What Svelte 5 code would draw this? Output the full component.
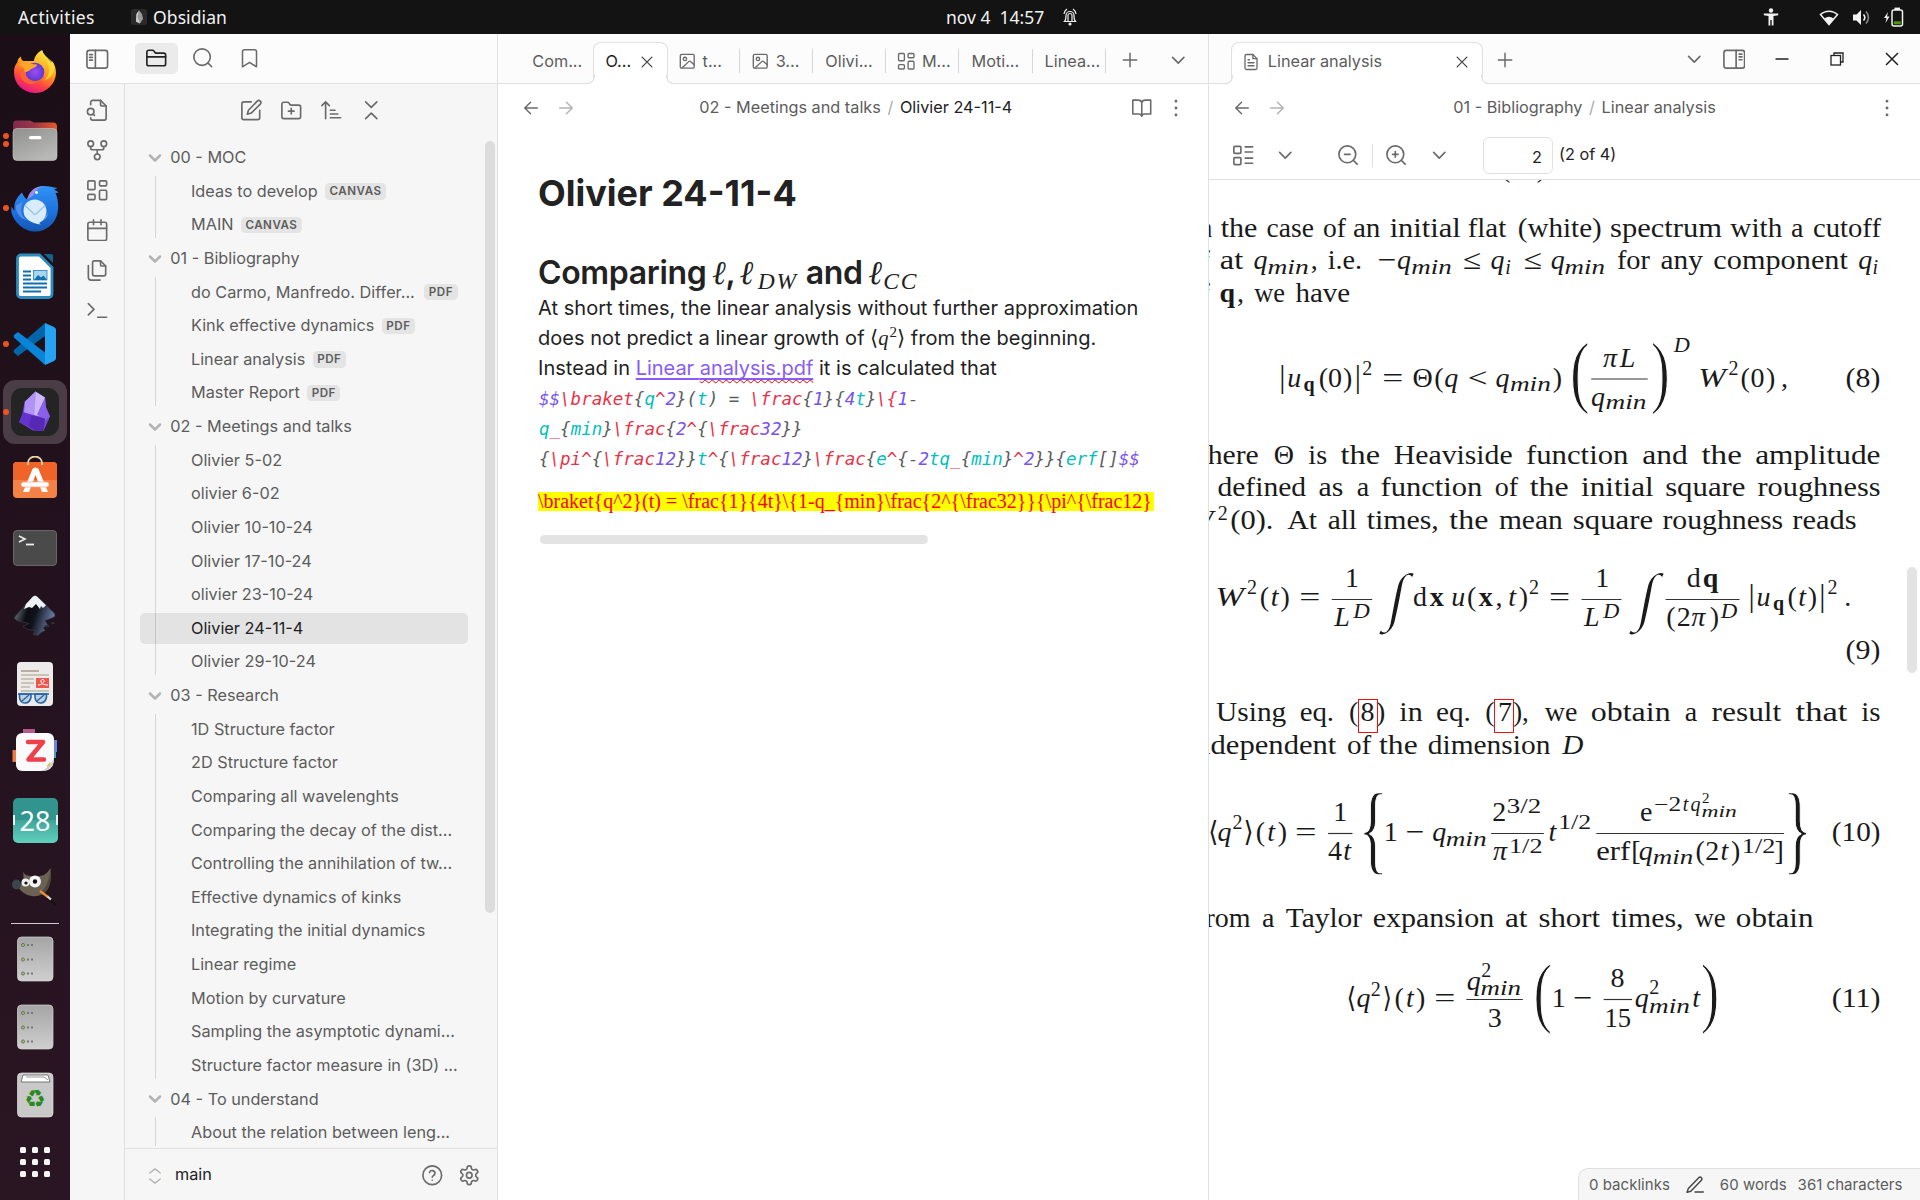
<script>
  // 24px-grid stroke icons
  const icons = {
    panelLeft: '<rect x="1" y="2.5" width="22" height="19" rx="2.5"/><path d="M10 2.5v19M3.8 7h3M3.8 10h3M3.8 13h3"/>',
    panelRight: '<rect x="1" y="2.5" width="22" height="19" rx="2.5"/><path d="M14 2.5v19M17.2 6.5h3M17.2 9.5h3M17.2 12.5h3"/>',
    folder: '<path d="M20 20a2 2 0 0 0 2-2V8.5a2 2 0 0 0-2-2h-7.9a2 2 0 0 1-1.69-.9L9.6 4.4A2 2 0 0 0 7.93 3.5H4a2 2 0 0 0-2 2V18a2 2 0 0 0 2 2Z"/><path d="M2 10.5h20"/>',
    search: '<circle cx="11" cy="11" r="9"/><path d="m21.5 21.5-4.2-4.2"/>',
    bookmark: '<path d="m20 21.5-8-5-8 5V4a2 2 0 0 1 2-2h12a2 2 0 0 1 2 2z"/>',
    fileSearch: '<path d="M15.5 1.500H7a2 2 0 0 0-2 2v2.500M5 20v.5a2 2 0 0 0 2 2h12.500a2 2 0 0 0 2-2V7.500L15.500 1.500"/><path d="M15.500 1.500v4a2 2 0 0 0 2 2h4"/><circle cx="5" cy="13.500" r="3.500"/><path d="m9 17.500-1.500-1.500"/>',
    fork: '<circle cx="12" cy="19" r="3"/><circle cx="5" cy="5" r="3"/><circle cx="19" cy="5" r="3"/><path d="M19 8v1.5a2 2 0 0 1-2 2H7a2 2 0 0 1-2-2V8M12 11.5V16"/>',
    dashboard: '<rect width="7.6" height="9.4" x="2" y="2" rx="1.2"/><rect width="7.6" height="5.4" x="14.4" y="2" rx="1.2"/><rect width="7.6" height="10" x="14.4" y="12" rx="1.2"/><rect width="7.6" height="5.6" x="2" y="16.4" rx="1.2"/>',
    calendar: '<path d="M8 1v5M16 1v5"/><rect width="20" height="19.5" x="2" y="3.5" rx="2"/><path d="M2 10h20"/>',
    files: '<path d="M15.500 2H9a2 2 0 0 0-2 2v12a2 2 0 0 0 2 2h10a2 2 0 0 0 2-2V7.500Z"/><path d="M15.500 2v4a1.500 1.500 0 0 0 1.500 1.500h4"/><path d="M2.500 7v12.500a3 3 0 0 0 3 3H15"/>',
    terminal: '<path d="m2.500 17 6-6-6-6M12.500 19.500h9.500"/>',
    edit: '<path d="M12 3H4a2 2 0 0 0-2 2v15a2 2 0 0 0 2 2h15a2 2 0 0 0 2-2v-8"/><path d="M18.4 2.2a2.1 2.1 0 0 1 3.200 3.200L12 15l-4.200 1.200L9 12Z"/>',
    folderPlus: '<path d="M12 10v6M9 13h6"/><path d="M20 21a2 2 0 0 0 2-2V8.500a2 2 0 0 0-2-2h-7.900a2 2 0 0 1-1.690-.9L9.600 4.400A2 2 0 0 0 7.930 3.500H4a2 2 0 0 0-2 2V19a2 2 0 0 0 2 2Z"/>',
    sort: '<path d="m2 7 4-4 4 4M6 3v18M11 12h5M11 16h8M11 20h11"/>',
    collapse: '<path d="m6 21 6-6 6 6M6 3l6 6 6-6"/>',
    chevron: '<path d="m6 9 6 6 6-6"/>',
    updown: '<path d="m5 16 7 5.500 7-5.500M5 8l7-5.500 7 5.500"/>',
    help: '<circle cx="12" cy="12" r="10"/><path d="M9.100 9a3 3 0 0 1 5.830 1c0 2-3 2.500-3 4M12 17.300h.01"/>',
    gear: '<path d="M12.220 2h-.44a2 2 0 0 0-2 2v.18a2 2 0 0 1-1 1.730l-.43.25a2 2 0 0 1-2 0l-.15-.08a2 2 0 0 0-2.730.73l-.22.38a2 2 0 0 0 .73 2.730l.15.1a2 2 0 0 1 1 1.720v.51a2 2 0 0 1-1 1.740l-.15.09a2 2 0 0 0-.73 2.730l.22.38a2 2 0 0 0 2.730.73l.15-.08a2 2 0 0 1 2 0l.43.25a2 2 0 0 1 1 1.730V20a2 2 0 0 0 2 2h.44a2 2 0 0 0 2-2v-.18a2 2 0 0 1 1-1.730l.43-.25a2 2 0 0 1 2 0l.15.08a2 2 0 0 0 2.730-.73l.22-.39a2 2 0 0 0-.73-2.730l-.15-.08a2 2 0 0 1-1-1.740v-.5a2 2 0 0 1 1-1.740l.15-.09a2 2 0 0 0 .73-2.730l-.22-.38a2 2 0 0 0-2.730-.73l-.15.08a2 2 0 0 1-2 0l-.43-.25a2 2 0 0 1-1-1.730V4a2 2 0 0 0-2-2z"/><circle cx="12" cy="12" r="3"/>',
    image: '<rect width="18" height="18" x="3" y="3" rx="2"/><circle cx="9" cy="9" r="2.200"/><path d="m5.500 20.500 8.300-8a2 2 0 0 1 2.800 0L21 16.500"/>',
    doc: '<path d="M14.500 2H6a2 2 0 0 0-2 2v16a2 2 0 0 0 2 2h12a2 2 0 0 0 2-2V7.500Z"/><path d="M14.500 2v5.500H20M16 13H8M16 17H8M10 9H8"/>',
    x: '<path d="M18.500 5.500l-13 13M5.500 5.500l13 13"/>',
    plus: '<path d="M4 12h16M12 4v16"/>',
    back: '<path d="m11.500 19-7-7 7-7M19.500 12h-15"/>',
    forward: '<path d="m12.500 19 7-7-7-7M4.500 12h15"/>',
    book: '<path d="M2 3.500h6a4 4 0 0 1 4 3v15a3 3 0 0 0-3-2.500H2zM22 3.500h-6a4 4 0 0 0-4 3v15a3 3 0 0 1 3-2.500h7z"/>',
    dots: '<circle cx="12" cy="12" r=".7"/><circle cx="12" cy="4.500" r=".7"/><circle cx="12" cy="19.500" r=".7"/>',
    thumbs: '<rect width="7.500" height="7.500" x="2" y="2.500" rx="1"/><rect width="7.500" height="7.500" x="2" y="14.500" rx="1"/><path d="M14 3h8M14 8.500h8M14 15h8M14 20.500h8"/>',
    zoomOut: '<circle cx="11" cy="11" r="9"/><path d="m21.500 21.500-4.200-4.200M8 11h6"/>',
    zoomIn: '<circle cx="11" cy="11" r="9"/><path d="m21.500 21.500-4.200-4.200M8 11h6M11 8v6"/>',
    pencil: '<path d="M12 20.500h10"/><path d="M16.500 3.200a2.200 2.200 0 0 1 3.200 3.200L7 19.500l-4.500 1.300L4 16.200Z"/>'
  };

  const tree = [
    { name: '00 - MOC', items: [['Ideas to develop', 'CANVAS'], ['MAIN', 'CANVAS']] },
    { name: '01 - Bibliography', items: [['do Carmo, Manfredo. Differ...', 'PDF'], ['Kink effective dynamics', 'PDF'], ['Linear analysis', 'PDF'], ['Master Report', 'PDF']] },
    { name: '02 - Meetings and talks', items: [['Olivier 5-02'], ['olivier 6-02'], ['Olivier 10-10-24'], ['Olivier 17-10-24'], ['olivier 23-10-24'], ['Olivier 24-11-4'], ['Olivier 29-10-24']] },
    { name: '03 - Research', items: [['1D Structure factor'], ['2D Structure factor'], ['Comparing all wavelenghts'], ['Comparing the decay of the dist...'], ['Controlling the annihilation of tw...'], ['Effective dynamics of kinks'], ['Integrating the initial dynamics'], ['Linear regime'], ['Motion by curvature'], ['Sampling the asymptotic dynami...'], ['Structure factor measure in (3D) ...']] },
    { name: '04 - To understand', items: [['About the relation between leng...']] }
  ];
  const current = 'Olivier 24-11-4';

  const tabs = [['Com...'], ['O...', null, true], ['t...', 'image'], ['3...', 'image'], ['Olivi...'], ['M...', 'dashboard'], ['Moti...'], ['Linea...']];

  // LaTeX source, one [class, text] token list per visual line
  const code = [
    [['n', '$$'], ['k', '\\braket'], ['b', '{'], ['v', 'q'], ['k', '^'], ['n', '2'], ['b', '}('], ['v', 't'], ['b', ') = '], ['k', '\\frac'], ['b', '{'], ['n', '1'], ['b', '}{'], ['n', '4'], ['v', 't'], ['b', '}'], ['k', '\\{'], ['n', '1'], ['b', '-']],
    [['v', 'q'], ['k', '_'], ['b', '{'], ['v', 'min'], ['b', '}'], ['k', '\\frac'], ['b', '{'], ['n', '2'], ['k', '^'], ['b', '{'], ['k', '\\frac'], ['n', '32'], ['b', '}}']],
    [['b', '{'], ['k', '\\pi^'], ['b', '{'], ['k', '\\frac'], ['n', '12'], ['b', '}}'], ['v', 't'], ['k', '^'], ['b', '{'], ['k', '\\frac'], ['n', '12'], ['b', '}'], ['k', '\\frac'], ['b', '{'], ['v', 'e'], ['k', '^'], ['b', '{-'], ['n', '2'], ['v', 'tq'], ['k', '_'], ['b', '{'], ['v', 'min'], ['b', '}'], ['k', '^'], ['n', '2'], ['b', '}}{'], ['v', 'erf'], ['b', '[]'], ['n', '$$']]
  ];
  const errorText = '\\braket{q^2}(t) = \\frac{1}{4t}\\{1-q_{min}\\frac{2^{\\frac32}}{\\pi^{\\frac12}';

  // PDF text layer: [baseline, size, style, "word|start|end ..."] with columns in page units
  const unit = 0.45918;
  const px = (u) => 1200 + u * unit;
  const runs = [
    [176.500, 28, '', '(|656|675 )|734|753'],
    [236.700, 28, '', 'In|-12|26 the|45|125 case|145|248 of|268|318 an|333|393 initial|413|568 flat|583|667 (white)|692|875 spectrum|893|1137 with|1155|1268 a|1288|1313 cutoff|1335|1483'],
    [269, 28, '', 'of|-28|21 at|43|94 ,|243|255 i.e.|278|353 −|387|428 ≤|573|613 ≤|705|745 for|908|980 any|1003|1095 component|1118|1411'],
    [269, 28, 'i', 'q|118|145 q|431|458 q|636|660 q|766|792 q|1436|1462'],
    [273.500, 20, 'i', 'min|147|237 min|460|548 i|664|678 min|794|882 i|1464|1477'],
    [301.700, 28, '', 'of|-28|21 ,|82|94 we|118|185 have|208|327'],
    [301.700, 28, 'b', 'q|43|76'],
    // (8)
    [387.300, 28, '', '||173|186 (|260|278 0|280|308 )|312|331 ||338|350 =|397|443 Θ|463|507 (|511|530 <|583|626 )|769|788 (|1178|1197 0|1200|1228 )|1234|1252 ,|1266|1280 (8)|1406|1482'],
    [387.300, 28, 'i', 'u|189|222 q|533|561 q|645|673 W|1085|1145'],
    [391, 20, 'b', 'q|225|250'],
    [375, 20, '', '2|353|376 2|1151|1173'],
    [391, 20, 'i', 'min|675|764'],
    [367.300, 28, 'i', 'π|876|910 L|912|950'],
    [405.500, 28, 'i', 'q|853|881'],
    [409.300, 20, 'i', 'min|883|972'],
    [352.300, 20, 'i', 'D|1032|1067'],
    [464, 28, '', 'where|-30|128 Θ|160|205 is|236|277 the|306|392 Heaviside|422|681 function|710|933 and|963|1062 the|1092|1180 amplitude|1209|1482'],
    [496, 28, '', 'defined|38|231 as|258|312 a|340|370 function|393|615 of|642|693 the|718|803 initial|830|988 square|1013|1188 roughness|1214|1482'],
    [528.700, 28, '', '(0).|66|160 At|190|255 all|278|342 times,|363|520 the|543|628 mean|651|790 square|812|987 roughness|1007|1270 reads|1290|1430'],
    [528.700, 28, 'i', 'W|-29|29'],
    [519.500, 20, '', '2|38|61'],
    // (9)
    [605.700, 28, '', '(|131|150 )|176|195 =|216|262 d|463|495 (|582|601 ,|645|657 )|695|714 =|760|806 ||1195|1208 (|1280|1299 )|1324|1343 ||1349|1362 .|1404|1417'],
    [605.700, 28, 'i', 'W|34|96 t|152|173 u|547|578 t|670|690 u|1211|1243 t|1301|1322'],
    [605.700, 28, 'b', 'x|498|533 x|604|641'],
    [594, 20, '', '2|102|125 2|716|739 2|1366|1389'],
    [587.300, 28, '', '1|317|345 1|862|890 d|1059|1092'],
    [587.300, 28, 'b', 'q|1094|1130'],
    [626, 28, 'i', 'L|291|328 L|835|872'],
    [617.700, 20, 'i', 'D|334|370 D|878|913 D|1134|1170'],
    [626, 28, '', '(|1016|1035 2|1040|1067 )|1111|1130'],
    [626, 28, 'i', 'π|1068|1102'],
    [609.500, 20, 'b', 'q|1247|1273'],
    [658.500, 28, '', '(9)|1406|1482'],
    [721.300, 28, '', 'Using|35|188 eq.|217|292 (|325|344 8|350|380 )|384|403 in|434|485 eq.|514|590 (|622|641 7|650|678 ),|682|716 we|751|822 obtain|851|1025 a|1054|1085 result|1114|1266 that|1297|1410 is|1440|1482'],
    [754, 28, '', 'independent|-29|297 of|320|373 the|390|474 dimension|496|763'],
    [754, 28, 'i', 'D|789|835'],
    // (10)
    [840.800, 28, '', '⟨|18|40 ⟩|95|117 (|122|141 )|170|189 =|207|254 1|402|429 −|448|489 (10)|1376|1482'],
    [840.800, 28, 'i', 'q|39|68 t|144|166 q|507|535 t|757|778'],
    [828.800, 20, '', '2|70|93 1/2|780|852'],
    [820.800, 28, '', '1|292|319 2|638|665 e|958|986'],
    [860, 28, '', '4|280|308 erf|863|937 [|942|957 (|1080|1099 2|1102|1129 )|1157|1176 ]|1254|1269'],
    [860, 28, 'i', 't|310|331 π|636|671 q|957|985 t|1131|1153'],
    [845.500, 20, 'i', 'min|535|624'],
    [812.600, 20, '', '3/2|668|743'],
    [852.900, 20, '', '1/2|673|746 1/2|1180|1253'],
    [810.900, 20, '', '−2|989|1048'],
    [810.900, 20, 'i', 't|1050|1065 q|1068|1090'],
    [802.900, 15, '', '2|1092|1111'],
    [817, 16, 'i', 'min|1092|1169'],
    [864, 20, 'i', 'min|986|1074'],
    [927.300, 28, '', 'From|-22|110 a|134|163 Taylor|187|353 expansion|376|641 at|664|713 short|737|871 times,|896|1053 we|1077|1145 obtain|1167|1336'],
    // (11)
    [1007.200, 28, '', '⟨|319|340 ⟩|398|418 (|424|443 )|471|490 =|510|556 1|768|795 −|813|855 (11)|1376|1482'],
    [1007.200, 28, 'i', 'q|342|370 t|446|468 q|948|976 t|1070|1091'],
    [996, 20, '', '2|371|394'],
    [989.600, 28, 'i', 'q|582|610'],
    [976.900, 20, '', '2|612|635'],
    [994.800, 20, 'i', 'min|611|699'],
    [1026.800, 28, '', '3|628|656 15|881|939'],
    [987.200, 28, '', '8|896|923'],
    [994, 20, '', '2|978|1000'],
    [1013, 20, 'i', 'min|978|1067']
  ];
  const words = runs.flatMap(([y, size, style, line]) =>
    line.split(' ').map((w) => {
      const p = w.split('|');
      const b = +p.pop();
      const a = +p.pop();
      const t = p.join('|') || '|';
      // relations and wide capitals keep their drawn width, other single symbols their natural shape
      const single = t.length === 1 && !'=−<≤⟨⟩WD'.includes(t);
      return { y, size: t === '|' ? 31 : size, style, t, single, x: px(single ? (a + b) / 2 : a), w: (b - a) * unit };
    })
  );
  // fraction bars
  const bars = [[852, 975, 379], [287, 375, 599.500], [831, 918, 599.500], [1014, 1175, 599.500], [279, 332, 833.500], [634, 749, 833.500], [863, 1272, 833.500], [580, 703, 999.500], [879, 941, 999.500]];
  // tall delimiters: glyph, left, right, top, bottom
  const tall = [['(', 812, 845, 344, 412], [')', 985, 1017, 344, 412], ['{', 358, 392, 794, 879.500], ['}', 1287, 1320, 794, 879.500], ['(', 732, 763, 965, 1032.500], [')', 1094, 1125, 965, 1032.500]].map(([t, a, b, top, bot]) => {
    const size = (bot - top) / 0.853;
    const brace = t === '{' || t === '}';
    const ink = brace ? (t === '{' ? [0.100, 0.350] : [0.130, 0.380]) : t === '(' ? [0.048, 0.304] : [0.029, 0.285];
    const sx = ((b - a) * unit) / ((ink[1] - ink[0]) * size);
    return { t, size, tf: `translate(${px(a) - ink[0] * size * sx} ${bot - 0.177 * size}) scale(${sx} 1)` };
  });
</script>

{#snippet icon(name, size = 22.5, cls = '')}
  <svg class="ic {cls}" width={size} height={size} viewBox="0 0 24 24">{@html icons[name]}</svg>
{/snippet}

<div class="desktop">
  <header class="topbar">
    <span class="act">Activities</span>
    <svg class="appicon" width="16" height="16" viewBox="0 0 16 16"><rect width="16" height="16" rx="3" fill="#2a2a2a" /><path d="M8 1.500 11 5l1 5-3 4.500-4-2L5.500 5Z" fill="#999" /><path d="M8 1.500 6.500 8 9 14.500 5 12.500 5.500 5Z" fill="#ccc" /></svg>
    <span class="app">Obsidian</span>
    <span class="clock">nov 4&nbsp; 14:57</span>
    <svg class="bell" width="16" height="18" viewBox="0 0 16 18" fill="none" stroke="#eee" stroke-width="1.200"><path d="M2.500 13.500c1.500-1.500 1.500-3 1.500-6a4 4 0 0 1 8 0c0 3 0 4.500 1.500 6ZM6 13V7.500a2 2 0 0 1 4 0V13M2 6c.3-2.500 1.500-4 3-5M14 6c-.3-2.500-1.500-4-3-5" /><circle cx="8" cy="16" r="1" fill="#eee" /></svg>
    <div class="tray">
      <svg width="16" height="18" viewBox="0 0 16 18" fill="#f2f2f2"><circle cx="8" cy="2.500" r="2.200" /><path d="M.8 5.500h14.400v1.800L10.500 8v9.500H8.700V12H7.300v5.500H5.500V8L.8 7.300Z" /></svg>
      <svg class="wifi" width="20" height="17" viewBox="0 0 20 17"><path d="M1.500 5.500a12.500 12.500 0 0 1 17 0L10 15.500Z" fill="none" stroke="#f2f2f2" stroke-width="1.500" /><path d="M5.500 9.500a7 7 0 0 1 9 0L10 15.500Z" fill="#f2f2f2" /></svg>
      <svg class="vol" width="19" height="17" viewBox="0 0 19 17"><path d="M1 5.500h3.500L9 1v15l-4.500-4.500H1Z" fill="#f2f2f2" /><path d="M11.500 5.500a4.500 4.500 0 0 1 0 6" fill="none" stroke="#f2f2f2" stroke-width="1.600" /><path d="M14 2.500a8.500 8.500 0 0 1 0 12" fill="none" stroke="#888" stroke-width="1.600" /></svg>
      <svg width="21" height="20" viewBox="0 0 21 20"><path d="M5 5 1 11h2.500L2.500 16 6.500 9.500H4Z" fill="#f2f2f2" /><rect x="9" y="3" width="10.500" height="16" rx="2" fill="none" stroke="#f2f2f2" stroke-width="1.500" /><rect x="11.500" y=".6" width="5.500" height="2.400" fill="#f2f2f2" /><rect x="10.800" y="14.300" width="7" height="3" fill="#4e9a06" /></svg>
    </div>
  </header>

  <div class="body">
    <nav class="dock">
      <div class="slot">
        <svg width="48" height="48" viewBox="0 0 48 48">
          <defs>
            <linearGradient id="ff" x1=".8" y1="0" x2=".35" y2="1"><stop offset="0" stop-color="#fff44f" /><stop offset=".45" stop-color="#ffa01a" /><stop offset=".75" stop-color="#ff4444" /><stop offset="1" stop-color="#e31587" /></linearGradient>
            <radialGradient id="ffg"><stop offset="0" stop-color="#a04bf5" /><stop offset="1" stop-color="#5b3ad0" /></radialGradient>
          </defs>
          <path d="M3 24c0-4 1-7 3.500-10 0-2 1-4 3.500-5.500 0 3 1.500 4.500 3 4.500h10c0-4 4-9 8-11 1 4 4 6 6 9 1 2 2 3 3 4l1-2c3 4 4 8 4 12a21 20.500 0 0 1-42-1Z" fill="url(#ff)" />
          <path d="M31 2c-1 6 4 9 6 14 3 7 0 14-5 17 9-3 13-10 11-17-2-4-11-8-12-14Z" fill="#ffdf3c" opacity=".8" />
          <circle cx="24" cy="24" r="9.300" fill="url(#ffg)" />
          <path d="M8 17c4-4 8-4 12-1l6 .5c0 3-5 3.500-6.500 5-2 2-4 2.500-6 3C14 20 11 18 8 17Z" fill="#ffa52a" />
          <path d="M13.500 24c1 7 8 11 15 8-3 5-12 6-17 0-3-4-3-9 0-12Z" fill="#ff6136" />
        </svg>
      </div>
      <div class="slot run2">
        <svg width="48" height="48" viewBox="0 0 48 48"><defs><linearGradient id="fld" x1="0" x2="1"><stop stop-color="#7c2a4c" /><stop offset=".5" stop-color="#9c3748" /><stop offset="1" stop-color="#e9582a" /></linearGradient><linearGradient id="fl2" x2=".6" y2="1"><stop stop-color="#8f8f8d" /><stop offset="1" stop-color="#b8b8b6" /></linearGradient></defs><path d="M2 8a3.500 3.500 0 0 1 3.500-3.500H19l4 2h19a4 4 0 0 1 4 4V20H2Z" fill="url(#fld)" /><rect x="2" y="12.500" width="44" height="32" rx="4" fill="url(#fl2)" stroke="#c8c8c6" stroke-width=".6" /><rect x="18" y="20" width="12.500" height="3.200" rx="1.500" fill="#fff" /></svg>
      </div>
      <div class="slot run1">
        <svg width="48" height="48" viewBox="0 -1.500 48 48"><defs><linearGradient id="tb" x2="0" y2="1"><stop stop-color="#3293f5" /><stop offset=".6" stop-color="#1b70dc" /><stop offset="1" stop-color="#1556b0" /></linearGradient></defs><path d="M.5 21c1 2 1.500 3 3 4-1-7 2-13 7.500-18 1 3 3 5 4.500 7L18 10c2-5 7-9 14-9.500 5-.3 10 1.500 14.500 2L43 4l5 3-3.500.5c4 9 4 22-3 30.500A23 23 0 0 1 5 36C1 31-.5 26 .5 21Z" fill="url(#tb)" /><path d="M16.500 13.500C18 7 22 3 27 1.500L33 .8c-5 1-9 4-10.500 9l-6 3.700Z" fill="#9d8cf0" /><path d="M12 16c-3 6-3 15 5 19-7-1-13-8-12-15Z" fill="#4f8ff0" /><path d="M13 30c3 4 10 7 17 6 4-1 7-5 7-9-1 4-6 6-10 8Z" fill="#6ea2ef" /><path d="M24 14c6 0 11.500 5 11.500 11.500S30 37 28 37.500c1 .5 1 1 2 1.500C20 38 12.500 33 12.500 25.500S18 14 24 14Z" fill="#d9ecfd" /><path d="m14 20 9 8.500q1 .8 2 0l9-8.500" fill="none" stroke="#9cc4ea" stroke-width="1.500" /><circle cx="25.500" cy="7" r="1.400" fill="#fff" /></svg>
      </div>
      <div class="slot">
        <svg width="48" height="48" viewBox="0 0 48 48"><path d="M10 3h18.500L41 15.500V42a3.500 3.500 0 0 1-3.500 3.500H10A3.500 3.500 0 0 1 6.500 42V6.500A3.500 3.500 0 0 1 10 3Z" fill="#fff" stroke="#2b8dbd" stroke-width="2.800" /><path d="M33 2h7a2 2 0 0 1 2 2v7Z" fill="#14638f" /><path d="M12 19.500h8M12 23.500h8M12 27.500h8M12 31.500h24M12 35.500h24M12 39.500h18" stroke="#0e70b0" stroke-width="1.800" /><rect x="22.500" y="18.500" width="13.500" height="9.500" fill="#a6d6f0" stroke="#0e70b0" stroke-width=".7" /><path d="m23 28 4-5 3 2.500 2.500-2 3.500 4.500Z" fill="#0e70b0" /></svg>
      </div>
      <div class="slot run1">
        <svg width="48" height="48" viewBox="0 0 48 48"><path d="M34 3 3 30c-.5 1-.5 2 0 2.500L7 36l27-20Z" fill="#0065a9" /><path d="M34 45 3 17.500c-.5-1-.5-2 0-2.500L7 12l27 20.500Z" fill="#0a84d6" /><path d="m34 3 9 4q2 1 2 3v28q0 2-2 3l-9 4Z" fill="#27a3f3" /></svg>
      </div>
      <div class="slot run1 focused">
        <svg width="48" height="48" viewBox="0 0 48 48"><rect width="48" height="48" rx="11" fill="#242424" /><path d="M24.500 3.500 34 9.500l1 10 4 9-6.500 14.500L22 42.500 8 34l3-6 2.500-14Z" fill="#7846de" /><path d="M24.500 3.500 14 13.500l-1 11L23 27l1.500-11Z" fill="#b193f7" /><path d="M24.500 3.500 24 16l-1 11 11 2.500-1-10 1-10Z" fill="#cdb9fb" /><path d="m34 9.500 1 10 4 9-5 4-8-6Z" fill="#8a60ea" /><path d="M12 24 8 34l10 5 2-12Z" fill="#6432cc" /><path d="m18 39 2-12 14 3.500-1.500 12.500L24 42.500Z" fill="#5728b4" /></svg>
      </div>
      <div class="slot">
        <svg width="48" height="48" viewBox="0 0 48 48"><rect x="2" y="6" width="44" height="36" rx="4" fill="#f58145" /><path d="M2 24V10a4 4 0 0 1 4-4h36a4 4 0 0 1 4 4v14Z" fill="#f0642a" /><path d="M17 9V7a7 6.500 0 0 1 14 0v2" fill="none" stroke="#ecd3a8" stroke-width="1.800" /><path d="M12 36 21.500 13q1-1.500 3-1.500t3 1.500L37 36h-6l-6.500-17L18 36Z" fill="#fff" /><rect x="10" y="26" width="28" height="5" rx="2.500" fill="#fff" stroke="#f0a585" stroke-width=".7" /></svg>
      </div>
      <div class="slot">
        <svg width="48" height="48" viewBox="0 0 48 48"><rect x="2.500" y="6.500" width="43" height="35" rx="3.500" fill="#4a4a4a" stroke="#666" /><path d="m8 12 6 3-6 3" fill="none" stroke="#eee" stroke-width="1.600" /><path d="M15 20.500h8" stroke="#eee" stroke-width="1.800" /></svg>
      </div>
      <div class="slot">
        <svg width="48" height="48" viewBox="0 0 48 48"><defs><linearGradient id="ink" x2="1" y2=".3"><stop stop-color="#8a93a0" /><stop offset=".4" stop-color="#0b0d12" /><stop offset=".6" stop-color="#10131b" /><stop offset="1" stop-color="#63759a" /></linearGradient></defs><path d="M22 4.500q2-1.500 4 0L43 21q2.500 3-1 4.500l-8 3 1 2 2 3-5 2 2 3-4 2-3 3-5-1 2-4-7-1-5-3 6-3-12-3q-4-2-1-5Z" fill="url(#ink)" stroke="#39404e" stroke-width=".6" /><path d="M22 4.500q2-1.500 4 0l9 8.800-3 2.700-2-2-1 3-4-5-4 4-3-1-5 2 2-5Z" fill="#eef1f5" /><ellipse cx="36" cy="34" rx="2.500" ry="1.200" fill="#2b3446" /><ellipse cx="42" cy="31" rx="1.800" ry="1" fill="#2b3446" /></svg>
      </div>
      <div class="slot">
        <svg width="48" height="48" viewBox="0 0 48 48"><rect x="6" y="2" width="36" height="44" rx="4" fill="#ecebe9" /><path d="M10 11h18" stroke="#b2a89c" stroke-width="1.800" /><path d="M10 15h28M10 19h13M10 23h13M10 27h9M10 31h28" stroke="#c9c5b4" stroke-width="1.800" /><rect x="25" y="18" width="13" height="10" fill="#f0564b" /><path d="M27 25c5 0 8-5 5-5.500s-4 5.500 5 5.500" fill="none" stroke="#fff" /><g fill="#c3d0dc" stroke="#2365ab" stroke-width="1.600"><path d="M8.500 34h11.500v3q-1 6-6 6-5 0-5.500-6ZM24 34h11.500v3q-1 6-6 6-5 0-5.500-6Z" /></g><path d="M7 34h31M11 41l7-6M26 41l7-6" stroke="#2365ab" stroke-width="1.300" /></svg>
      </div>
      <div class="slot">
        <svg width="48" height="48" viewBox="0 0 48 48"><rect x="12" y="1" width="12" height="8" fill="#b9598a" /><rect x="38" y="12" width="8" height="12" fill="#7083de" /><rect x="40" y="23" width="5" height="7" fill="#4f9bd0" /><rect x="1.500" y="22" width="6" height="12" fill="#ec7d4a" /><path d="M11 5h26a6 6 0 0 1 6 6v20q0 12-12 12H11a6 6 0 0 1-6-6V11a6 6 0 0 1 6-6Z" fill="#fafafa" /><path d="M29 43c9 0 14-4 14-14-2 5-4 7-6 7-1 4-3 6-8 7Z" fill="#cfcfcf" /><path d="M35 38q3-1 4-5v5Z" fill="#dcc24a" /><path d="M17 14h15L17.500 31.500H33" fill="none" stroke="#ee3f4a" stroke-width="4.500" stroke-linejoin="round" stroke-linecap="round" /></svg>
      </div>
      <div class="slot">
        <div class="cal">28</div>
      </div>
      <div class="slot">
        <svg width="48" height="48" viewBox="0 0 48 48"><path d="M12 8c2 3 5 4 8 4h8c6 0 9-4 11.500-8 1 10 0 20-6 25-5 4-14 4-19 1-4-2-6-5-8-8 5-1 7-6 5.500-14Z" fill="#6b6253" /><path d="M39.500 4c1 10 0 20-6 25l-6 2c7-6 11-14 12-27Z" fill="#50483b" /><ellipse cx="5.500" cy="20.500" rx="4.500" ry="5" fill="#39474c" /><circle cx="14.500" cy="18.500" r="4" fill="#eee" /><circle cx="24" cy="17.500" r="6" fill="#f4f4f4" /><circle cx="15" cy="19" r="1.600" fill="#111" /><circle cx="24" cy="17.500" r="2.200" fill="#111" /><path d="m29 27 8 6" stroke="#e8923a" stroke-width="2.300" /><path d="m36.500 32.500 4 3.500" stroke="#ddd" stroke-width="2.300" /><path d="m40 35.500 4.500 5.500" stroke="#111" stroke-width="2.500" /></svg>
      </div>
      <div class="sep"></div>
      {#each [0, 1] as n (n)}
        <div class="slot">
          <svg width="48" height="48" viewBox="0 0 48 48"><defs><linearGradient id="drv{n}" x2="0" y2="1"><stop stop-color="#a5a5a5" /><stop offset="1" stop-color="#cfcfcf" /></linearGradient></defs><rect x="6.500" y="2" width="35.500" height="44" rx="4" fill="url(#drv{n})" stroke="#d5d5d5" stroke-width=".7" />{#each [10, 24.500, 38.500] as y (y)}<circle cx="12" cy={y} r="1.600" fill="#9bbf4e" stroke="#666" stroke-width=".8" /><path d="M16 {y}h2M20 {y}h2" stroke="#777" stroke-width="1.800" />{/each}</svg>
        </div>
      {/each}
      <div class="slot trash">
        <svg width="48" height="48" viewBox="0 0 48 48"><rect x="6.500" y="2" width="35.500" height="44" rx="4" fill="#c9c9c9" stroke="#dedede" stroke-width=".7" /><path d="M10 11 12 4h25l2 7Z" fill="#fff" stroke="#777" stroke-width="1" /><path d="M15 6h18l4 3" fill="none" stroke="#999" /></svg>
        <span class="recycle">♻</span>
      </div>
      <div class="grid9">{#each Array(9) as _, i (i)}<i></i>{/each}</div>
    </nav>

    <div class="side">
      <div class="sidehead">
        <div class="toggle">{@render icon('panelLeft', 22.500)}</div>
        <div class="sidetab on">{@render icon('folder')}</div>
        <div class="sidetab">{@render icon('search', 22)}</div>
        <div class="sidetab">{@render icon('bookmark', 21)}</div>
      </div>
      <div class="siderow">
        <div class="ribbon">
          {#each ['fileSearch', 'fork', 'dashboard', 'calendar', 'files', 'terminal'] as n (n)}<div class="rb">{@render icon(n)}</div>{/each}
        </div>
        <div class="explorer">
          <div class="nav">
            {#each ['edit', 'folderPlus', 'sort', 'collapse'] as n (n)}<div>{@render icon(n)}</div>{/each}
          </div>
          <div class="treewrap">
            <div class="tree">
              {#each tree as f (f.name)}
                <div class="row dir">{@render icon('chevron', 20, 'faint bold')}<span>{f.name}</span></div>
                <div class="kids">
                  {#each f.items as [name, tag] (name)}
                    <div class="row file" class:sel={name === current}><span>{name}</span>{#if tag}<b class:far={name.startsWith('do')}>{tag}</b>{/if}</div>
                  {/each}
                </div>
              {/each}
            </div>
            <div class="thumb"></div>
          </div>
          <div class="vault">{@render icon('updown', 18, 'faint')}<span>main</span>{@render icon('help')}{@render icon('gear')}</div>
        </div>
      </div>
    </div>

    <section class="pane main">
      <div class="tabs">
        {#each tabs as [label, ic, on], i (label)}
          <div class="tab" class:on class:div={i > 1}>{#if ic}{@render icon(ic, 18.500)}{/if}<span>{label}</span>{#if on}<em>{@render icon('x', 18)}</em>{/if}</div>
        {/each}
        <div class="tplus">{@render icon('plus', 20)}</div>
        <div class="tchev">{@render icon('chevron', 22.500)}</div>
      </div>
      <div class="crumbs">
        {@render icon('back', 20)}{@render icon('forward', 20, 'faint')}
        <div class="path">02 - Meetings and talks<s>/</s><strong>Olivier 24-11-4</strong></div>
        {@render icon('book', 21.500)}{@render icon('dots', 22, 'dots')}
      </div>
      <article>
        <h1>Olivier 24-11-4</h1>
        <h2>Comparing <i>ℓ</i>, <i class="gap">ℓ</i><i class="sub">DW</i> and <i>ℓ</i><i class="sub">CC</i></h2>
        <p>At short times, the linear analysis without further approximation<br />does not predict a linear growth of <span class="m">⟨<i>q</i><sup>2</sup>⟩</span> from the beginning.<br />Instead in <a href="#pdf">Linear <u>analysis.pdf</u></a> it is calculated that</p>
        <pre>{#each code as line, i (i)}<div>{#each line as [c, t], j (j)}<span class={c}>{t}</span>{/each}</div>{/each}</pre>
        <div class="err"><span>{errorText}</span></div>
        <div class="hbar"></div>
      </article>
    </section>

    <section class="pane right">
      <div class="tabs">
        <div class="tab on wide">{@render icon('doc', 18)}<span>Linear analysis</span><em>{@render icon('x', 18)}</em></div>
        <div class="rplus">{@render icon('plus', 20)}</div>
        <div class="wins">
          {@render icon('chevron', 22.500)}
          {@render icon('panelRight', 22.500)}
          <svg width="14" height="14" viewBox="0 0 14 14" fill="none" stroke="#222" stroke-width="1.500"><path d="M.5 7h13" /></svg>
          <svg width="14" height="14" viewBox="0 0 14 14" fill="none" stroke="#222" stroke-width="1.300"><rect x="1" y="3.500" width="9.500" height="9.500" /><path d="M4 3.500V1h9v9h-2.500" /></svg>
          <svg width="14" height="14" viewBox="0 0 14 14" fill="none" stroke="#222" stroke-width="1.500"><path d="m1 1 12 12M13 1 1 13" /></svg>
        </div>
      </div>
      <div class="crumbs">
        {@render icon('back', 20)}{@render icon('forward', 20, 'faint')}
        <div class="path">01 - Bibliography<s>/</s>Linear analysis</div>
        {@render icon('dots', 22, 'dots')}
      </div>
      <div class="pdfbar">
        {@render icon('thumbs')}{@render icon('chevron')}{@render icon('zoomOut')}<hr />{@render icon('zoomIn')}{@render icon('chevron')}
        <div class="num">2</div><span>(2 of 4)</span>
      </div>
      <div class="pdf">
        <svg class="page" width="711" height="1020" viewBox="1209 180 711 1020">
          {#each words as w, i (i)}
            {#if w.single}
              <text class="{w.style} mid" x={w.x} y={w.y} font-size={w.size}>{w.t}</text>
            {:else}
              <text class={w.style} x={w.x} y={w.y} font-size={w.size} textLength={w.w} lengthAdjust="spacingAndGlyphs">{w.t}</text>
            {/if}
          {/each}
          {#each bars as [a, b, y] (a + '-' + y)}<path class="bar" d="M{px(a)} {y}H{px(b)}" />{/each}
          {#each tall as d, i (i)}<text class="thin" font-size={d.size} transform={d.tf}>{d.t}</text>{/each}
          <text class="thin" font-size="64" transform="translate(1385 617.500) skewX(-11)">∫</text>
          <text class="thin" font-size="64" transform="translate(1635 617.500) skewX(-11)">∫</text>
          <rect class="ref" x="1358.500" y="699.500" width="19" height="33" />
          <rect class="ref" x="1494.500" y="699.500" width="19" height="33" />
        </svg>
        <div class="vthumb"></div>
      </div>
      <footer><span>0 backlinks</span>{@render icon('pencil', 20, 'dark')}<span>60 words</span><span class="last">361 characters</span></footer>
    </section>
  </div>
</div>

<style>
  :global(body) { margin: 0; overflow: hidden; background: #fff; }
  .desktop { width: 1920px; height: 1200px; display: flex; flex-direction: column; font: 16.25px/1.3 Inter, sans-serif; color: #5c5c5c; }
  .desktop * { box-sizing: border-box; }
  .topbar { height: 34px; flex: none; background: #131313; color: #f2f2f2; display: flex; align-items: center; font: 400 17.500px "Noto Sans", sans-serif; white-space: pre; padding-left: 18px; }
  .act { width: 113px; letter-spacing: .4px; }
  .appicon { margin-right: 6px; }
  .app { width: 793px; letter-spacing: .1px; }
  .clock { width: 116px; }
  .tray { margin-left: auto; display: flex; align-items: center; padding-right: 16px; }
  .wifi { margin-left: 40px; }
  .vol { margin: 0 12px 0 13px; }
  .body { flex: 1; min-height: 0; display: flex; }

  .dock { width: 70px; flex: none; background: linear-gradient(170deg, #1b0e16, #23121e 50%, #2a1622); padding-top: 4px; display: flex; flex-direction: column; align-items: center; }
  .slot { width: 64px; height: 64px; margin: 2px 0; flex: none; display: flex; align-items: center; justify-content: center; position: relative; border-radius: 12px; }
  .focused { background: #4a3d46; }
  .run1::before, .run2::before, .run2::after { content: ""; position: absolute; left: 0; top: 29px; width: 6px; height: 6px; border-radius: 50%; background: #e95420; }
  .run2::before { top: 25px; }
  .run2::after { top: 33px; }
  .cal { width: 45px; height: 45px; border-radius: 5px; background: linear-gradient(90deg, #dff5f0 2px, transparent 2px 43px, #dff5f0 43px) 0 17px / 100% 10px no-repeat, linear-gradient(#31948f 50%, #3fa69c 50%, #62d0bc); color: #fff; font: 27px/45px "Noto Sans", sans-serif; text-align: center; }
  .sep { width: 48px; height: 1px; background: #cfc9cd; margin: 1px 0; flex: none; }
  .recycle { position: absolute; left: 0; right: 0; top: 22px; text-align: center; font: 24px/28px "DejaVu Sans", sans-serif; color: #268a1e; }
  .grid9 { display: grid; grid-template-columns: repeat(3, 6px); gap: 6px; margin-top: 18px; }
  .grid9 i { width: 6px; height: 6px; border-radius: 1.500px; background: #f6f6f6; }

  .ic { fill: none; stroke: currentColor; stroke-width: 1.750; stroke-linecap: round; stroke-linejoin: round; flex: none; display: block; color: #6a6a6a; }
  .faint { color: #b3b3b3; }
  .bold { stroke-width: 3; }
  .dark { color: #444; }
  .dots { fill: currentColor; }
  .side { width: 428px; flex: none; display: flex; flex-direction: column; border-right: 1px solid #e0e0e0; background: #f6f6f6; }
  .sidehead { height: 50px; flex: none; background: #fcfcfc; border-bottom: 1px solid #e0e0e0; display: flex; align-items: center; }
  .toggle { width: 65px; padding: 1px 0 0 16px; }
  .sidetab { width: 43px; height: 31px; margin: 0 3.500px 1px 0; border-radius: 5px; display: flex; align-items: center; justify-content: center; }
  .sidetab.on { background: #ebebeb; }
  .sidetab.on .ic { color: #222; }
  .siderow { flex: 1; min-height: 0; display: flex; }
  .ribbon { width: 55px; border-right: 1px solid #e0e0e0; padding-top: 6px; }
  .rb { height: 40px; display: flex; align-items: center; justify-content: center; }
  .explorer { flex: 1; min-width: 0; display: flex; flex-direction: column; }
  .nav { height: 57px; display: flex; justify-content: center; padding: 14.500px 0 0 0; }
  .nav div { width: 39.900px; display: flex; justify-content: center; }
  .treewrap { flex: 1; min-height: 0; overflow: hidden; position: relative; padding-left: 15px; }
  .tree { width: 328px; padding-top: 1.100px; }
  .row { height: 31.125px; margin-bottom: 2.500px; display: flex; align-items: center; white-space: nowrap; border-radius: 5px; }
  .dir { padding-left: 5px; gap: 5.300px; }
  .kids { position: relative; }
  .kids::before { content: ""; position: absolute; left: 15px; top: 0; bottom: 2.500px; width: 1px; background: rgba(0, 0, 0, .13); }
  .file { padding-left: 51px; }
  .sel { background: #e3e3e3; color: #222; }
  .file b { font-size: 11.600px; font-weight: 600; line-height: 16.500px; letter-spacing: .5px; background: #e4e4e4; border-radius: 4.500px; padding: 0 4.600px; margin-left: 7.300px; }
  .file b.far { margin-left: 9.500px; }
  .thumb { position: absolute; right: 2px; top: 0; width: 10px; height: 772px; border-radius: 5px; background: #dcdcdc; }
  .vault { height: 52px; border-top: 1px solid #e0e0e0; display: flex; align-items: center; padding: 2px 17px 0 21px; }
  .vault span { flex: 1; padding-left: 11px; color: #222; margin-top: -2px; }
  .vault .ic + .ic { margin-left: 14.500px; }

  .pane { display: flex; flex-direction: column; background: #fff; min-width: 0; position: relative; }
  .main { width: 711px; flex: none; border-right: 1px solid #e0e0e0; }
  .right { flex: 1; }
  .tabs { height: 50px; flex: none; background: #fcfcfc; border-bottom: 1px solid #e0e0e0; display: flex; align-items: flex-end; padding-left: 22.300px; white-space: nowrap; }
  .tab { width: 73.100px; height: 42px; display: flex; align-items: center; padding: 0 0 1px 12px; position: relative; }
  .tab.div::after { content: ""; position: absolute; right: 0; top: 8px; width: 1px; height: 24px; background: #d6d6d6; }
  .tab .ic { margin: 0 7px 0 -1.500px; }
  .main .tab.div .ic + span { margin-left: -.5px; }
  .tab.on { background: #fff; border: 1px solid #e0e0e0; border-bottom: 0; border-radius: 8px 8px 0 0; margin-bottom: -1px; height: 42px; width: 75px; margin-right: -1.300px; padding-left: 11px; padding-bottom: 3px; }
  .main .on { color: #222; }
  .tab.on::before, .tab.on::after { content: ""; position: absolute; bottom: 0; width: 8px; height: 8px; border-bottom: 1px solid #e0e0e0; }
  .tab.on::before { left: -8px; border-right: 1px solid #e0e0e0; border-radius: 0 0 8px 0; box-shadow: 4px 4px 0 #fff; clip-path: inset(0 -1px 0 0); }
  .tab.on::after { right: -8px; border-left: 1px solid #e0e0e0; border-radius: 0 0 0 8px; box-shadow: -4px 4px 0 #fff; clip-path: inset(0 0 0 -1px); }
  .tab em { margin-left: auto; padding-right: 11px; }
  .tab em .ic { margin: 0; color: #444; }
  .tplus { margin: 0 0 13px 14.500px; }
  .tchev { margin: 0 0 12px 27px; }
  .wide.on { width: 252px; margin-right: 0; padding-left: 13px; }
  .wide .ic { margin: 0 7.500px 0 -3px; }
  .wide em { padding-right: 11px; }
  .rplus { margin: 0 0 13px 12px; }
  .wins { margin: 0 21px 13px auto; display: flex; align-items: center; }
  .wins svg:nth-child(2) { margin-left: 17px; }
  .wins svg:nth-child(3) { margin-left: 30px; }
  .wins svg:nth-child(4) { margin-left: 41px; }
  .wins svg:nth-child(5) { margin-left: 41px; }
  .crumbs { height: 46px; flex: none; display: flex; align-items: center; padding: 1px 21px 0 23px; }
  .crumbs .faint { margin-left: 15px; }
  .crumbs .dots { margin-left: 13px; }
  .crumbs .path { flex: 1; text-align: center; }
  .main .path { padding-left: 5px; }
  .right .path { padding-left: 19px; }
  .crumbs s { text-decoration: none; color: #aaa; margin: 0 6.600px; }
  .crumbs strong { font-weight: 400; color: #222; }
  .right .crumbs { padding-right: 22px; }

  article { padding: 0 54px 0 40px; color: #222; }
  h1 { font-size: 36px; line-height: 43px; letter-spacing: 0; font-weight: 700; margin: 42px 0 0; white-space: nowrap; }
  h2 { font-size: 32px; line-height: 38px; letter-spacing: -.35px; font-weight: 600; margin: 39px 0 0; white-space: nowrap; }
  h2 i { font: italic 400 33px/20px "Liberation Serif", serif; margin-left: -2px; }
  h2 i.gap { margin-left: -3px; }
  h2 i.sub { font-size: 23.500px; position: relative; top: 5px; letter-spacing: 1.800px; margin-left: 1.500px; }
  h2 i.gap + i.sub { margin-left: 5px; }
  p { font-size: 20px; line-height: 30px; letter-spacing: .037px; margin: 1px 0 0; white-space: nowrap; }
  .m { font: 20.500px/20px "Liberation Serif", serif; }
  .m sup { font-size: 15px; line-height: 0; margin-left: 1px; }
  a { letter-spacing: -.04px; color: #8a5cf5; text-decoration: underline; text-decoration-thickness: 1.500px; text-underline-offset: 3px; text-decoration-skip-ink: none; }
  u { text-decoration: underline wavy #e00 1px; text-underline-offset: 4px; text-decoration-skip-ink: none; }
  pre { margin: 1px 0 0; font: italic 17.500px/30px "DejaVu Sans Mono", monospace; padding-left: 1px; }
  .n { color: #7852ee; }
  .k { color: #e93147; }
  .v { color: #00bfbc; }
  .b { color: #5c5c5c; }
  .err { width: 615.500px; height: 18.500px; margin-top: 18px; background: #ff0; color: #f00; white-space: nowrap; font: 20px/18px "Liberation Serif", serif; }
  .hbar { width: 388px; height: 9px; margin: 24px 0 0 2px; border-radius: 5px; background: #e3e3e3; }

  .pdfbar { height: 50px; flex: none; border-bottom: 1px solid #e0e0e0; display: flex; align-items: center; padding: 1px 0 0 23px; color: #222; }
  .pdfbar .ic:nth-child(2) { margin-left: 19px; }
  .pdfbar .ic:nth-child(3) { margin-left: 40.500px; }
  .pdfbar hr { width: 1px; height: 23px; border: 0; background: #e0e0e0; margin: 0 12.500px; }
  .pdfbar .ic:nth-child(6) { margin-left: 20px; }
  .num { width: 70px; height: 37px; border: 1px solid #e0e0e0; border-radius: 6px; margin: 0 6px 0 33px; padding: 0 10px 0 0; text-align: right; line-height: 38px; }
  .pdf { flex: 1; min-height: 0; position: relative; overflow: hidden; }
  .page { display: block; font-family: "Liberation Serif", "DejaVu Sans", serif; fill: #1a1a1a; }
  .page .i { font-style: italic; }
  .page .b { font-weight: 700; fill: #1a1a1a; }
  .mid { text-anchor: middle; }
  .thin { stroke: #fff; stroke-width: 1.300; }
  .bar { stroke: #333; stroke-width: 1.200; }
  .ref { fill: none; stroke: #e11; stroke-width: 1; }
  .vthumb { position: absolute; right: 3px; top: 387px; width: 10px; height: 106px; border-radius: 5px; background: #e3e3e3; }
  footer { position: absolute; right: 0; bottom: 0; width: 342px; height: 32px; background: #f6f6f6; border: 1px solid #e0e0e0; border-width: 1px 0 0 1px; border-radius: 10px 0 0 0; display: flex; align-items: center; padding-left: 10px; font-size: 15px; letter-spacing: .03px; white-space: nowrap; }
  footer .ic { margin: 0 15px; }
  footer .last { margin-left: 11px; }
</style>
